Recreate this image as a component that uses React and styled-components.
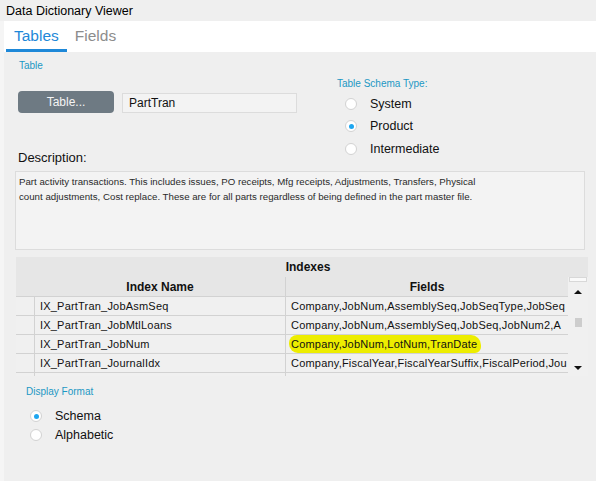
import styled, { createGlobalStyle } from 'styled-components'

const GlobalStyle = createGlobalStyle`
    html, body {
        margin: 0;
        padding: 0;
        background: #efefef;
    }
    body {
        font-family: "Liberation Sans", Arial, sans-serif;
        color: #111;
    }
`
const Window = styled.div`
    width: 596px;
    height: 481px;
    background-color: #efefef;
    display: flex;
    flex-direction: column;
    overflow: hidden;
`
const TitleBar = styled.div`
    height: 21px;
    padding-left: 6px;
    display: flex;
    align-items: center;
    font-size: 12.5px;
    color: #000;
`
const Main = styled.div`
    flex: 1;
    border-left: 4px solid #f5f5f5;
    display: flex;
    flex-direction: column;
`
const TabBar = styled.div`
    height: 31px;
    background-color: #fff;
    display: flex;
    align-items: stretch;
    padding-left: 2px;
`
const Tab = styled.div`
    padding: 2px 8px 0;
    display: flex;
    align-items: center;
    font-size: 15.5px;
    color: ${p => (p.$active ? '#1e88d8' : '#8c8c8c')};
    border-bottom: 3px solid ${p => (p.$active ? '#1e88d8' : 'transparent')};
`
const Body = styled.div`
    padding: 8px 8px 0 11px;
    display: flex;
    flex-direction: column;
`
const TopSection = styled.div`
    display: flex;
`
const LeftCol = styled.div`
    width: 322px;
    display: flex;
    flex-direction: column;
`
const RightCol = styled.div`
    display: flex;
    flex-direction: column;
    padding-top: 18px;
`
const GroupLabel = styled.div`
    font-size: 10px;
    line-height: 12px;
    color: #1c98c4;
    margin-left: ${p => p.$indent || 0}px;
`
const TableRow = styled.div`
    display: flex;
    align-items: center;
    gap: 8px;
    margin: 19px 0 0 3px;
`
const TableButton = styled.button`
    width: 96px;
    height: 22px;
    border: none;
    border-radius: 4px;
    background-color: #6e7a83;
    color: #f4f4f4;
    font-family: inherit;
    font-size: 12px;
    padding: 0;
`
const TextInput = styled.div`
    width: 167px;
    height: 18px;
    border: 1px solid #dcdcdc;
    background-color: #f3f3f3;
    font-size: 12px;
    display: flex;
    align-items: center;
    padding-left: 6px;
    margin-top: 1px;
`
const DescLabel = styled.div`
    font-size: 13px;
    line-height: 15px;
    margin: 37px 0 0 3px;
    color: #111;
`
const RadioRow = styled.div`
    height: ${p => p.$h || 21}px;
    margin-top: ${p => p.$top || 0}px;
    display: flex;
    align-items: center;
    gap: 13px;
    padding-left: ${p => p.$indent || 0}px;
    font-size: 12.5px;
    color: #111;
`
const RadioCircle = styled.span`
    width: 10px;
    height: 10px;
    border-radius: 50%;
    border: 1px solid #d2d2d2;
    background-color: #fff;
    display: flex;
    align-items: center;
    justify-content: center;
    &::after {
        content: '';
        width: 5px;
        height: 5px;
        border-radius: 50%;
        background-color: ${p => (p.$checked ? '#1ea6f0' : 'transparent')};
    }
`
const DescriptionBox = styled.div`
    margin-top: 6px;
    width: 562px;
    height: 71px;
    border: 1px solid #dcdcdc;
    background-color: #f3f3f3;
    padding: 2px 3px 4px;
    font-size: 9.7px;
    line-height: 15px;
    color: #2a2a2a;
    white-space: pre-line;
`
const Grid = styled.div`
    margin: 7px 0 0 1px;
    width: 572px;
    background-color: #e6e6e6;
    display: flex;
    flex-direction: column;
`
const GridCaption = styled.div`
    height: 20px;
    display: flex;
    align-items: center;
    justify-content: center;
    font-size: 12px;
    font-weight: bold;
    padding-left: 12px;
`
const GridBody = styled.div`
    display: flex;
    height: 99px;
    overflow: hidden;
`
const GridTable = styled.div`
    width: 552px;
    display: flex;
    flex-direction: column;
`
const GridRow = styled.div`
    display: grid;
    grid-template-columns: 18px 251px 283px;
    height: ${p => (p.$header ? 20 : 19)}px;
    flex-shrink: 0;
    border-bottom: 1px solid #d2d2d2;
    box-sizing: border-box;
    background-color: ${p => (p.$header ? '#e6e6e6' : '#f0f0f0')};
`
const Cell = styled.div`
    display: flex;
    align-items: center;
    justify-content: ${p => (p.$header ? 'center' : 'flex-start')};
    padding-left: ${p => (p.$header ? 0 : 5)}px;
    font-size: ${p => (p.$header ? 12 : 11)}px;
    letter-spacing: ${p => (p.$header ? 0 : 0.2)}px;
    font-weight: ${p => (p.$header ? 'bold' : 'normal')};
    color: #111;
    white-space: nowrap;
    overflow: hidden;
    border-left: 1px solid ${p => (p.$line ? '#d2d2d2' : 'transparent')};
`
const Marker = styled.span`
    background-color: #eded00;
    padding: 3px 4px 3px 2px;
    margin-left: -2px;
    border-radius: 8px 10px 6px 9px;
`
const ScrollBar = styled.div`
    width: 20px;
    background-color: #f0f0f0;
    display: flex;
    flex-direction: column;
    align-items: center;
`
const ScrollCap = styled.div`
    width: 18px;
    height: 5px;
    border: 1px solid #d8d8d8;
    background: #fafafa;
    box-sizing: border-box;
`
const Arrow = styled.div`
    width: 0;
    height: 0;
    border-left: 4px solid transparent;
    border-right: 4px solid transparent;
    ${p => (p.$down
        ? 'border-top: 4px solid #111; margin-top: auto; margin-bottom: 6px;'
        : 'border-bottom: 4px solid #111; margin-top: 8px;')}
`
const Thumb = styled.div`
    width: 7px;
    height: 9px;
    background-color: #cdcdcd;
    margin-top: 24px;
`
const DisplaySection = styled.div`
    margin-top: 10px;
    display: flex;
    flex-direction: column;
`

const rows = [
    ['IX_PartTran_JobAsmSeq', 'Company,JobNum,AssemblySeq,JobSeqType,JobSeq'],
    ['IX_PartTran_JobMtlLoans', 'Company,JobNum,AssemblySeq,JobSeq,JobNum2,A'],
    ['IX_PartTran_JobNum', 'Company,JobNum,LotNum,TranDate', true],
    ['IX_PartTran_JournalIdx', 'Company,FiscalYear,FiscalYearSuffix,FiscalPeriod,Jou'],
    ['', ''],
]

const App = () => {
    return (
        <Window>
            <GlobalStyle />
            <TitleBar>Data Dictionary Viewer</TitleBar>
            <Main>
                <TabBar>
                    <Tab $active>Tables</Tab>
                    <Tab>Fields</Tab>
                </TabBar>
                <Body>
                    <TopSection>
                        <LeftCol>
                            <GroupLabel $indent={4}>Table</GroupLabel>
                            <TableRow>
                                <TableButton>Table...</TableButton>
                                <TextInput>PartTran</TextInput>
                            </TableRow>
                            <DescLabel>Description:</DescLabel>
                        </LeftCol>
                        <RightCol>
                            <GroupLabel>Table Schema Type:</GroupLabel>
                            <RadioRow $indent={8} $h={22} $top={3}>
                                <RadioCircle />System
                            </RadioRow>
                            <RadioRow $indent={8} $h={22}>
                                <RadioCircle $checked />Product
                            </RadioRow>
                            <RadioRow $indent={8} $h={24}>
                                <RadioCircle />Intermediate
                            </RadioRow>
                        </RightCol>
                    </TopSection>
                    <DescriptionBox>
                        {'Part activity transactions. This includes issues, PO receipts, Mfg receipts, Adjustments, Transfers, Physical\ncount adjustments, Cost replace. These are for all parts regardless of being defined in the part master file.'}
                    </DescriptionBox>
                    <Grid>
                        <GridCaption>Indexes</GridCaption>
                        <GridBody>
                            <GridTable>
                                <GridRow $header>
                                    <Cell $header />
                                    <Cell $header>Index Name</Cell>
                                    <Cell $header $line>Fields</Cell>
                                </GridRow>
                                {rows.map(([name, fields, marked], i) => (
                                    <GridRow key={i}>
                                        <Cell />
                                        <Cell $line>{name}</Cell>
                                        <Cell $line>{marked ? <Marker>{fields}</Marker> : fields}</Cell>
                                    </GridRow>
                                ))}
                            </GridTable>
                            <ScrollBar>
                                <ScrollCap />
                                <Arrow />
                                <Thumb />
                                <Arrow $down />
                            </ScrollBar>
                        </GridBody>
                    </Grid>
                    <DisplaySection>
                        <GroupLabel $indent={11}>Display Format</GroupLabel>
                        <RadioRow $indent={15} $h={18} $top={9}>
                            <RadioCircle $checked />Schema
                        </RadioRow>
                        <RadioRow $indent={15} $h={19}>
                            <RadioCircle />Alphabetic
                        </RadioRow>
                    </DisplaySection>
                </Body>
            </Main>
        </Window>
    )
}

export default App
